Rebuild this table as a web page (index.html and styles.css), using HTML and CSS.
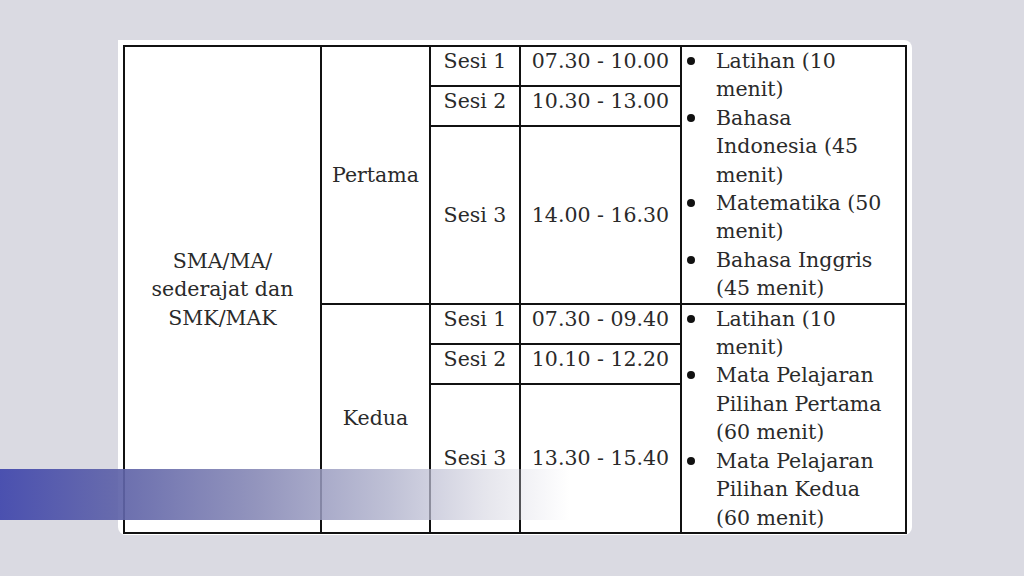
FILE: index.html
```html
<!DOCTYPE html>
<html lang="id">
<head>
<meta charset="utf-8">
<link rel="stylesheet" href="styles.css">
</head>
<body>
<div class="slide">
  <div class="card">
    <table class="jadwal">
      <colgroup>
        <col class="c1"><col class="c2"><col class="c3"><col class="c4"><col class="c5">
      </colgroup>
      <tr class="r-short">
        <td rowspan="6" class="mid">SMA/MA/<br>sederajat dan<br>SMK/MAK</td>
        <td rowspan="3" class="mid">Pertama</td>
        <td class="top">Sesi 1</td>
        <td class="top">07.30 - 10.00</td>
        <td rowspan="3" class="list">
          <ul>
            <li>Latihan (10 menit)</li>
            <li>Bahasa Indonesia (45 menit)</li>
            <li>Matematika (50 menit)</li>
            <li>Bahasa Inggris (45 menit)</li>
          </ul>
        </td>
      </tr>
      <tr class="r-short">
        <td class="top">Sesi 2</td>
        <td class="top">10.30 - 13.00</td>
      </tr>
      <tr class="r-long1">
        <td class="mid">Sesi 3</td>
        <td class="mid">14.00 - 16.30</td>
      </tr>
      <tr class="r-short">
        <td rowspan="3" class="mid">Kedua</td>
        <td class="top">Sesi 1</td>
        <td class="top">07.30 - 09.40</td>
        <td rowspan="3" class="list">
          <ul>
            <li>Latihan (10 menit)</li>
            <li>Mata Pelajaran Pilihan Pertama (60 menit)</li>
            <li>Mata Pelajaran Pilihan Kedua (60 menit)</li>
          </ul>
        </td>
      </tr>
      <tr class="r-short">
        <td class="top">Sesi 2</td>
        <td class="top">10.10 - 12.20</td>
      </tr>
      <tr class="r-long2">
        <td class="mid">Sesi 3</td>
        <td class="mid">13.30 - 15.40</td>
      </tr>
    </table>
  </div>
  <div class="accent"></div>
</div>
</body>
</html>
```

FILE: styles.css
```css
html, body {
  margin: 0;
  padding: 0;
}
body {
  background: #dadae2;
  width: 1024px;
  height: 576px;
  overflow: hidden;
  font-family: "DejaVu Serif", "Liberation Serif", serif;
}
.slide {
  position: relative;
  width: 1024px;
  height: 576px;
  padding-top: 40px;
  box-sizing: border-box;
}
.card {
  margin-left: 118px;
  width: 794px;
  height: 495px;
  background: #ffffff;
  border-radius: 0 8px 8px 8px;
  box-sizing: border-box;
  padding: 5px 0 0 5px;
}
.jadwal {
  border-collapse: collapse;
  table-layout: fixed;
  width: 784px;
  color: #2a2a2a;
  font-size: 20.5px;
  line-height: 28.4px;
}
.jadwal td {
  border: 2px solid #111;
  padding: 0;
  text-align: center;
  white-space: nowrap;
}
.c1 { width: 197px; }
.c2 { width: 109px; }
.c3 { width: 90px; }
.c4 { width: 161px; }
.c5 { width: 225px; }
.r-short { height: 40px; }
.r-long1 { height: 177px; }
.r-long2 { height: 148px; }
.jadwal td.top { vertical-align: top; }
.jadwal td.mid { vertical-align: middle; }
.jadwal td.list {
  vertical-align: top;
  text-align: left;
  white-space: normal;
}
.list ul {
  margin: 0;
  padding: 0 10px 0 34px;
  list-style: none;
}
.list li {
  position: relative;
}
.list li::before {
  content: "";
  position: absolute;
  left: -29px;
  top: 10px;
  width: 8px;
  height: 8px;
  border-radius: 50%;
  background: #111;
}
.accent {
  position: absolute;
  left: 0;
  top: 469px;
  width: 570px;
  height: 51px;
  background: linear-gradient(to right,
    rgba(70, 76, 174, 0.97) 0%,
    rgba(96, 100, 168, 0.92) 22%,
    rgba(132, 134, 180, 0.88) 45%,
    rgba(176, 178, 204, 0.82) 68%,
    rgba(212, 212, 224, 0.6) 85%,
    rgba(230, 230, 236, 0) 100%);
}
```
